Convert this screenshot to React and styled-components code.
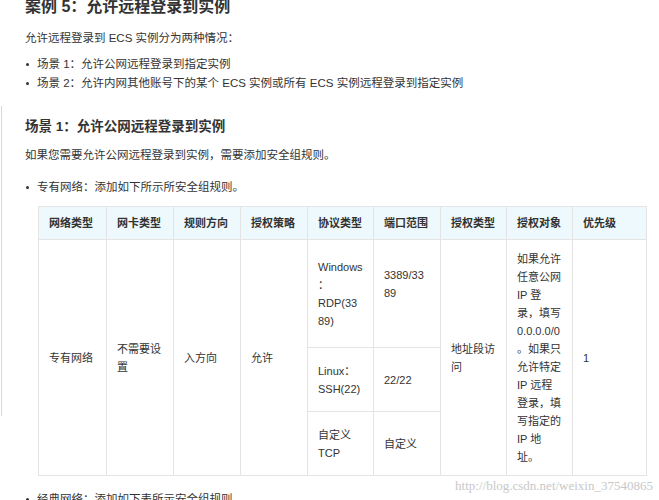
import React from "react";
import styled, { createGlobalStyle } from "styled-components";

const Global = createGlobalStyle`
  html, body { margin: 0; padding: 0; background: #fff; }
  body { font-family: "Liberation Sans", "Noto Sans CJK SC", sans-serif; color: #333; overflow: hidden; height: 500px; }
`;

const Page = styled.div`
  position: relative;
  height: 500px;
  overflow: hidden;
`;
const SideLine = styled.div`
  position: absolute; left: 1px; top: 106px; width: 1px; height: 310px; background: #d8d8d8;
`;
const Content = styled.div`
  padding: 0 0 0 25px;
  margin-top: -5px;
`;
const H1 = styled.h1`
  margin: 0; font-size: 16px; font-weight: bold; line-height: 24px; color: #333;
`;
const H2 = styled.h2`
  margin: 24px 0 0; font-size: 13.5px; font-weight: bold; line-height: 20px; color: #333;
`;
const P = styled.p`
  margin: ${p => p.$mt || 0}px 0 0; font-size: 11.5px; line-height: 18px;
`;
const List = styled.ul`
  margin: ${p => p.$mt || 0}px 0 0; padding: 0 0 0 12px; font-size: 11.5px; line-height: 19px;
  list-style: none;
`;
const Li = styled.li`
  position: relative;
  &::before { content: ""; position: absolute; left: -11px; top: 8px; width: 3px; height: 3px; border-radius: 50%; background: #333; }
`;
const Table = styled.table`
  border-collapse: collapse; margin: 9px 0 0 13px; table-layout: fixed; width: 608px;
  font-size: 11px; line-height: 18px;
  td, th { border: 1px solid #e4e4e4; padding: 0 10px; text-align: left; vertical-align: middle; white-space: nowrap; }
  th { background: #eef9fd; font-weight: bold; height: 32px; }
`;
const Td = styled.td`
  height: ${p => p.$h}px;
`;
const Watermark = styled.div`
  position: absolute; right: 6px; top: 478px; font-family: "Liberation Serif", serif; font-size: 13px; color: #c8c8c8;
`;

const heads = ["网络类型","网卡类型","规则方向","授权策略","协议类型","端口范围","授权类型","授权对象","优先级"];

export default function App() {
  return (
    <Page>
      <Global />
      <SideLine />
      <Content>
        <H1>案例 5：允许远程登录到实例</H1>
        <P $mt={10}>允许远程登录到 ECS 实例分为两种情况：</P>
        <List $mt={8}>
          <Li>场景 1：允许公网远程登录到指定实例</Li>
          <Li>场景 2：允许内网其他账号下的某个 ECS 实例或所有 ECS 实例远程登录到指定实例</Li>
        </List>
        <H2>场景 1：允许公网远程登录到实例</H2>
        <P $mt={9}>如果您需要允许公网远程登录到实例，需要添加安全组规则。</P>
        <List $mt={14}>
          <Li>专有网络：添加如下所示所安全组规则。</Li>
        </List>
        <Table>
          <colgroup>
            {[68,67,67,67,66,67,66,66,74].map((w,i)=><col key={i} style={{width:w}} />)}
          </colgroup>
          <thead><tr>{heads.map(h=><th key={h}>{h}</th>)}</tr></thead>
          <tbody>
            <tr>
              <Td rowSpan={3}>专有网络</Td>
              <Td rowSpan={3}>不需要设<br/>置</Td>
              <Td rowSpan={3}>入方向</Td>
              <Td rowSpan={3}>允许</Td>
              <Td $h={107}>Windows<br/>：<br/>RDP(33<br/>89)</Td>
              <Td style={{verticalAlign:"top",paddingTop:"26px"}}>3389/33<br/>89</Td>
              <Td rowSpan={3}>地址段访<br/>问</Td>
              <Td rowSpan={3}>如果允许<br/>任意公网<br/>IP 登<br/>录，填写<br/>0.0.0.0/0<br/>。如果只<br/>允许特定<br/>IP 远程<br/>登录，填<br/>写指定的<br/>IP 地<br/>址。</Td>
              <Td rowSpan={3}>1</Td>
            </tr>
            <tr>
              <Td $h={63}>Linux：<br/>SSH(22)</Td>
              <Td>22/22</Td>
            </tr>
            <tr>
              <Td $h={63}>自定义<br/>TCP</Td>
              <Td>自定义</Td>
            </tr>
          </tbody>
        </Table>
        <List $mt={14}>
          <Li>经典网络：添加如下表所示安全组规则</Li>
        </List>
      </Content>
      <Watermark>http://blog.csdn.net/weixin_37540865</Watermark>
    </Page>
  );
}
